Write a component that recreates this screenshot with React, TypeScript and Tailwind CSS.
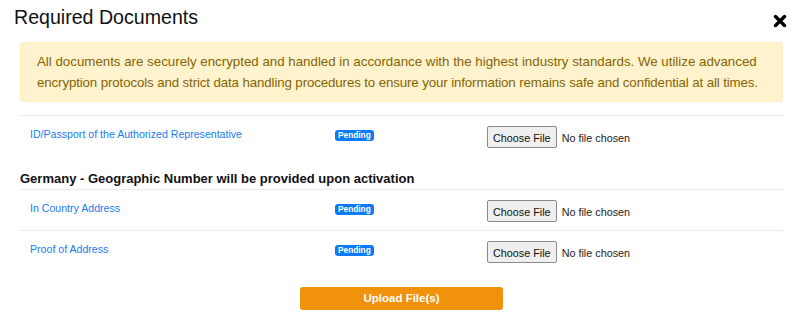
const ROWS_TOP = [{ label: "ID/Passport of the Authorized Representative" }];
const ROWS_DE = [{ label: "In Country Address" }, { label: "Proof of Address" }];

function CloseIcon() {
  return (
    <svg width="14" height="14" viewBox="0 0 14 14" aria-hidden="true">
      <path d="M2.5 2.5 L11.5 11.5 M11.5 2.5 L2.5 11.5" stroke="#000" strokeWidth="3.4" strokeLinecap="round" />
    </svg>
  );
}

function DocRow({ label }: { label: string }) {
  return (
    <div className="flex items-start border-t border-[#eaeaea] pb-[8px] pt-[10px]">
      <div className="w-[315px] pl-[10px] text-[10.6px] leading-[16px] text-[#1a7cf3]">{label}</div>
      <div className="flex w-[152px] pt-[4px] leading-[11px]">
        <span className="rounded-[3px] bg-[#0d7bf4] px-[3px] text-[8.3px] font-bold leading-[11px] text-white">
          Pending
        </span>
      </div>
      <input
        type="file"
        className="h-[22px] text-[10.8px] leading-[22px] text-[#222] file:mr-[5px] file:h-[22px] file:rounded-[2px] file:border file:border-[#8a8a8a] file:bg-[#efefef] file:px-[5px] file:py-0 file:text-[#111]"
      />
    </div>
  );
}

export default function App() {
  return (
    <div className="w-[800px] bg-white pl-[20px] pr-[17px] font-['Liberation_Sans',Arial,sans-serif]">
      <div className="-ml-[6px] flex items-start justify-between pt-[3px]">
        <h2 className="text-[19.6px] leading-[28px] text-[#111]">Required Documents</h2>
        <div className="mr-[-4px] mt-[11px]">
          <CloseIcon />
        </div>
      </div>

      <div className="mt-[11px] whitespace-nowrap rounded-[4px] border border-[#ffeeba] bg-[#fff3cd] py-[8px] pl-[16px] pr-[8px] text-[13.3px] leading-[21px] text-[#856404]">
        All documents are securely encrypted and handled in accordance with the highest industry standards. We utilize
        advanced
        <br />
        <span className="tracking-[-0.12px]">
          encryption protocols and strict data handling procedures to ensure your information remains safe and
          confidential at all times.
        </span>
      </div>

      <div className="mt-[13px]">
        {ROWS_TOP.map((r) => (
          <DocRow key={r.label} label={r.label} />
        ))}
      </div>

      <h3 className="mt-[13px] text-[13px] font-bold leading-[20px] text-[#111]">
        Germany - Geographic Number will be provided upon activation
      </h3>
      <div>
        {ROWS_DE.map((r) => (
          <DocRow key={r.label} label={r.label} />
        ))}
      </div>

      <div className="mt-[16px] flex justify-center pb-[14px]">
        <button className="h-[23px] w-[203px] rounded-[3px] bg-[#f0920a] text-[11.5px] font-bold text-white">
          Upload File(s)
        </button>
      </div>
    </div>
  );
}
